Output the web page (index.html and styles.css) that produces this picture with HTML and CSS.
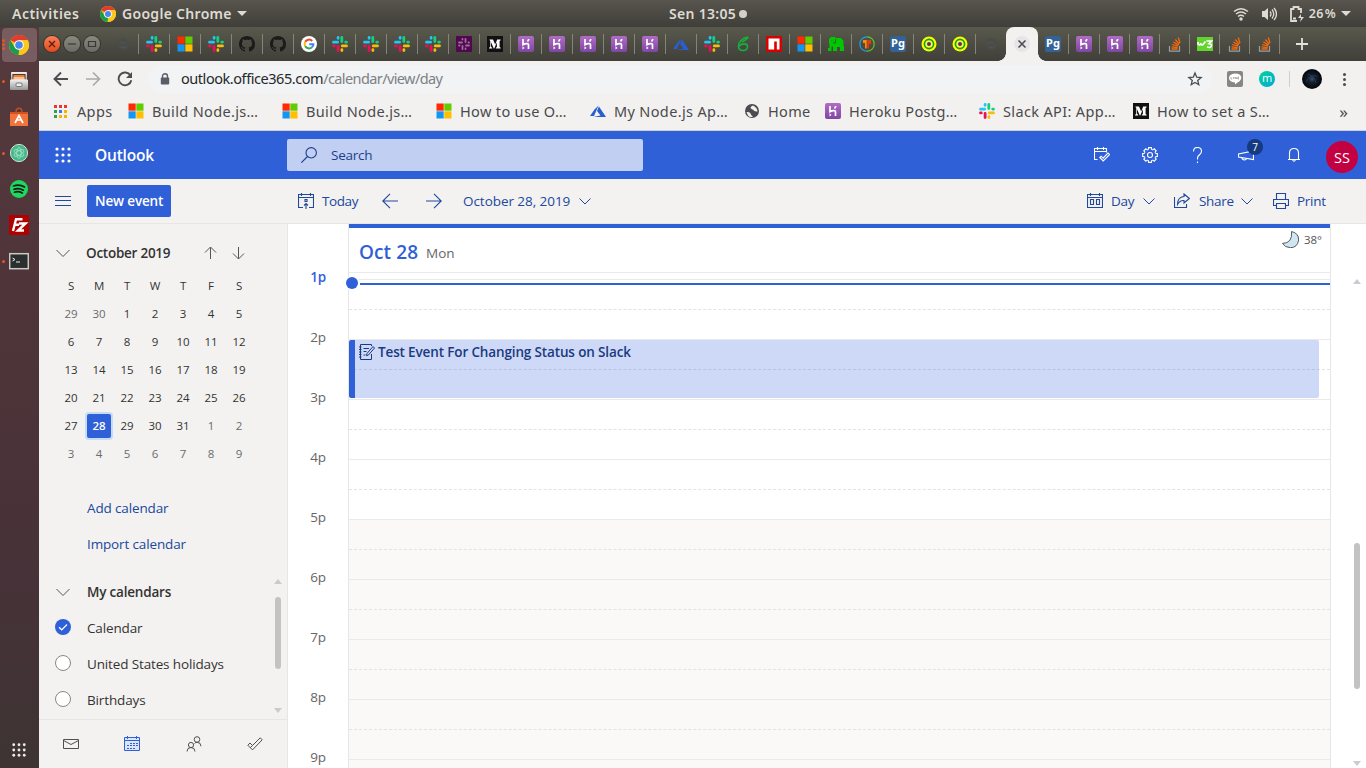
FILE: index.html
```html
<!DOCTYPE html>
<html lang="en">
<head>
<meta charset="utf-8">
<title>Outlook Calendar</title>
<link rel="stylesheet" href="styles.css">
</head>
<body>
<svg class="defs" aria-hidden="true">
  <defs>
    <linearGradient id="purple" x1="0" y1="0" x2="0" y2="1"><stop offset="0" stop-color="#b06dc5"/><stop offset="1" stop-color="#7f46a3"/></linearGradient>
    <linearGradient id="metal" x1="0" y1="0" x2="0" y2="1"><stop offset="0" stop-color="#f2f2f2"/><stop offset="1" stop-color="#969696"/></linearGradient>
    <radialGradient id="space"><stop offset="0" stop-color="#3c5068"/><stop offset=".35" stop-color="#15202f"/><stop offset="1" stop-color="#04050a"/></radialGradient>
    <symbol id="chrome" viewBox="0 0 20 20">
      <circle cx="10" cy="10" r="10" fill="#fbc116"/>
      <path d="M10 10L1.4 5A10 10 0 0 1 18.7 5H10z" fill="#e33b2e"/>
      <path d="M1.4 5L5.7 12.4 10 14.5 9.5 20A10 10 0 0 1 1.4 5z" fill="#189c4d"/>
      <path d="M14.3 12.4L9.7 20A10 10 0 0 0 18.7 5H10z" fill="#fcc81d"/>
      <circle cx="10" cy="10" r="4.8" fill="#fff"/><circle cx="10" cy="10" r="3.8" fill="#4688f1"/>
    </symbol>
    <symbol id="slack" viewBox="0 0 16 16">
      <g fill="none" stroke-width="2.8" stroke-linecap="round">
        <path d="M1.5 6.2H5.6M6.1 1.5v.8" stroke="#1fc8f5"/>
        <path d="M9.8 1.5V5.6M14.5 6.1h-.8" stroke="#14cf80"/>
        <path d="M14.5 9.9H10.3M9.9 14.5v-.8" stroke="#f7bd0c"/>
        <path d="M6.1 14.5V10.3M1.5 9.9h.8" stroke="#ee0f52"/>
      </g>
    </symbol>
    <symbol id="slackp" viewBox="0 0 16 16">
      <path d="M0 0h16v16H0z" fill="#4f0a4e"/>
      <g fill="none" stroke="#a06b9f" stroke-width="1.8" stroke-linecap="round"><path d="M3 6.5h3M6.5 3v.4M9.5 3v3M13 6.5h-.5M13 9.5h-3M9.5 13v-.5M6.5 13v-3M3 9.5h.5"/></g>
    </symbol>
    <symbol id="ms" viewBox="0 0 16 16"><path d="M.5.5h7.2v7.2H.5z" fill="#ff2a00"/><path d="M8.3.5h7.2v7.2H8.3z" fill="#62cc00"/><path d="M.5 8.3h7.2v7.2H.5z" fill="#1496f0"/><path d="M8.3 8.3h7.2v7.2H8.3z" fill="#ffbe00"/></symbol>
    <symbol id="github" viewBox="0 0 16 16"><path fill="#1b1b1b" d="M8 0C3.58 0 0 3.58 0 8c0 3.54 2.29 6.53 5.47 7.59.4.07.55-.17.55-.38 0-.19-.01-.82-.01-1.49-2.01.37-2.53-.49-2.69-.94-.09-.23-.48-.94-.82-1.13-.28-.15-.68-.52-.01-.53.63-.01 1.08.58 1.23.82.72 1.21 1.87.87 2.33.66.07-.52.28-.87.51-1.07-1.78-.2-3.64-.89-3.64-3.95 0-.87.31-1.59.82-2.15-.08-.2-.36-1.02.08-2.12 0 0 .67-.21 2.2.82.64-.18 1.32-.27 2-.27s1.36.09 2 .27c1.53-1.04 2.2-.82 2.2-.82.44 1.1.16 1.92.08 2.12.51.56.82 1.27.82 2.15 0 3.07-1.87 3.75-3.65 3.95.29.25.54.73.54 1.48 0 1.07-.01 1.93-.01 2.2 0 .21.15.46.55.38A8.01 8.01 0 0 0 16 8c0-4.42-3.58-8-8-8z"/></symbol>
    <symbol id="google" viewBox="0 0 16 16"><circle cx="8" cy="8" r="8" fill="#fff"/><g fill="none" stroke-width="2"><path d="M11.2 5A4.4 4.4 0 0 0 4.2 5.8" stroke="#ea4335"/><path d="M4.2 5.8a4.4 4.4 0 0 0 0 4.4" stroke="#fbbc05"/><path d="M4.2 10.2a4.4 4.4 0 0 0 6.7 1.1" stroke="#34a853"/><path d="M10.9 11.3A4.2 4.2 0 0 0 12.4 8.2H8.2" stroke="#4285f4"/></g></symbol>
    <symbol id="medium" viewBox="0 0 16 16"><path d="M0 0h16v16H0z" fill="#111"/><path d="M2.5 3.5H6l2.2 5 2-5h3.4v.7l-1 .8v6l1 .8v.7H8.900v-.7l1-.8V6.300l-2.600 6.200h-.5L4 6.300v4.300l1.200 1.300v.6H2.100v-.6l1.200-1.300V5l-.8-.9z" fill="#fff"/></symbol>
    <symbol id="heroku" viewBox="0 0 16 16"><rect width="16" height="16" rx="2" fill="url(#purple)"/><path d="M5 3v5.600c2-.9 5.500-1.700 5.500.2V13M10.700 3c0 1-.5 1.800-1.200 2.500" fill="none" stroke="#fff" stroke-width="1.700"/><path d="M4.500 10.200l2 1.700-2 1.600z" fill="#fff"/></symbol>
    <symbol id="azure" viewBox="0 0 16 16"><path d="M0 13L4.500 6.400 8.600 2.500 4 13z" fill="#285fd0"/><path d="M9 3.500L16 14H3.500l7-1.600L7 8z" fill="#285fd0"/></symbol>
    <symbol id="six" viewBox="0 0 16 16"><path d="M13 1C7 2 3.500 6 3.500 10.500c0 5.500 9 5 9 .3C12.500 7 7 7 4 10M13 1c0 2-3 3-6 5" fill="none" stroke="#12b43c" stroke-width="1.600"/></symbol>
    <symbol id="npm" viewBox="0 0 16 16"><path d="M0 0h16v16H0z" fill="#d90000"/><path d="M2.500 2.500h11v11H10.800V5.500H8.200v8H2.500z" fill="#fff"/></symbol>
    <symbol id="elephant" viewBox="0 0 16 16"><path d="M0 15V12h1.500V8.500L1 7V3l2-2h4l1 1h5l2.500 3v5H16v5h-4v-4H9v4H5v-4.500H3.500V15z" fill="#00c800"/><path d="M3.500 5h1M7.500 3v4H5" fill="none" stroke="#2a6a20"/></symbol>
    <symbol id="tp" viewBox="0 0 16 16"><path d="M8 .8a7.200 7.200 0 0 0 0 14.400" fill="none" stroke="#1da0e8" stroke-width="1.200"/><path d="M8 .8a7.200 7.200 0 0 1 0 14.400" fill="none" stroke="#5aca26" stroke-width="1.200"/><path d="M4 4h3.700v8.500H6V7H4z" fill="#ff8c00"/><path d="M8.300 4H12v4h-2v4.500H8.300z" fill="#e33a12"/></symbol>
    <symbol id="target" viewBox="0 0 16 16"><circle cx="8" cy="8" r="7.500" fill="#f6ff00"/><circle cx="8" cy="8" r="4.600" fill="#f6ff00" stroke="#159b17" stroke-width="1.600"/><circle cx="8" cy="8" r="2.700" fill="#e8e4dc"/><circle cx="8" cy="8" r="2" fill="#6a3030"/></symbol>
    <symbol id="stack" viewBox="0 0 16 16"><path d="M2.500 10v5.200h10V10" fill="none" stroke="#9aa0a5" stroke-width="1.200"/><path d="M4.500 13h6M4.600 10.900l6 .7M5.100 8.500l5.800 1.700M6.400 6l5.200 3.100M8.300 3.500l3.900 4.600M11.300 1.500l1.700 5.800" stroke="#f46a0c" stroke-width="1.300"/></symbol>
    <symbol id="w3" viewBox="0 0 16 16"><path d="M0 1h16v14H0z" fill="#63d42b"/><path d="M1 6v2q1.500 2 2.700 0V7v1q1.500 2 2.800 0L8.500 5.500M9.500 5h5l-2.500 2.600q3 .2 2.300 2.500-1.300 2.400-4.300.7" fill="none" stroke="#fff" stroke-width="1.700"/></symbol>
    <symbol id="globe" viewBox="0 0 16 16"><circle cx="8" cy="8" r="7" fill="#4a4c4f"/><path d="M2.500 9q3.500-.5 4 1.500t2.500 3q-3 1.500-5-1zM9 2.500Q5.500 4 7 5.500t2 1q1 2.500 4.500 2-.2-4-4.500-6z" fill="#f2f1f0"/></symbol>
    <symbol id="dimglobe" viewBox="0 0 16 16"><circle cx="8" cy="8" r="6" fill="#4a4c49"/><path d="M4 7c3-2 5 1 7 0M6 11q4 2 6-1" stroke="#545650" fill="none"/></symbol>
    <symbol id="chev" viewBox="0 0 14 14"><path d="M.5 4L7 10.500 13.500 4" fill="none" stroke="currentColor"/></symbol>
    <symbol id="chev-s" viewBox="0 0 12 12"><path d="M.5 3.500L6 9 11.500 3.500" fill="none" stroke="currentColor"/></symbol>
    <symbol id="grid9" viewBox="0 0 16 16"><g fill="currentColor"><circle cx="2" cy="2" r="1.600"/><circle cx="8" cy="2" r="1.600"/><circle cx="14" cy="2" r="1.600"/><circle cx="2" cy="8" r="1.600"/><circle cx="8" cy="8" r="1.600"/><circle cx="14" cy="8" r="1.600"/><circle cx="2" cy="14" r="1.600"/><circle cx="8" cy="14" r="1.600"/><circle cx="14" cy="14" r="1.600"/></g></symbol>
    <path id="tooth" d="M13.450 5.740L13.670 6.370 15.340 6.600V9.400L13.670 9.630 13.450 10.260"/>
  </defs>
</svg>

<div class="desktop">
  <header class="panel">
    <span class="panel-activities">Activities</span>
    <svg class="i16"><use href="#chrome"/></svg>
    <span class="panel-app">Google Chrome</span><i class="tri"></i>
    <span class="panel-clock">Sen 13:05</span><i class="clock-dot"></i>
    <div class="panel-status">
      <svg class="i16" viewBox="0 0 16 16" fill="none" stroke="#dfdbd2" stroke-width="1.500"><path d="M1 5.500q7-5.500 14 0M3 8q5-4 10 0M5 10.500q3-2.500 6 0"/><circle cx="8" cy="13" r="1" fill="#dfdbd2"/></svg>
      <svg class="i16" viewBox="0 0 16 16"><path d="M1 5h2.500L7 2v12l-3.500-3H1z" fill="#dfdbd2"/><path d="M9 5.500q2 2.500 0 5M11 3.500q3.500 4.500 0 9M13 2q5 6 0 12" fill="none" stroke="#dfdbd2" stroke-width="1.300"/></svg>
      <svg class="i16" viewBox="0 0 16 16" fill="none" stroke="#dfdbd2" stroke-width="1.800"><path d="M8 15H2V3h2.500V1h5v2H12v4M4 12.500h3"/><path d="M12 8l-3 4h3l-1 4 4-5h-3z" fill="#dfdbd2" stroke="none"/></svg>
      <span class="battery">26 %</span><i class="tri"></i>
    </div>
  </header>

  <div class="workspace">
    <aside class="dock">
      <div class="dock-item active"><i class="run run3"></i><svg viewBox="0 0 20 20"><use href="#chrome"/></svg></div>
      <div class="dock-item"><i class="run"></i><svg viewBox="0 0 20 20"><rect x="2" y="1" width="16" height="9" rx="1" fill="url(#metal)"/><path d="M3.500 3h13v5h-13z" fill="#4a382e"/><path d="M4.500 4h11v5h-11z" fill="#ef7f34"/><path d="M4.500 6h11v3h-11z" fill="#f8c197"/><rect x="1" y="8.500" width="18" height="10.500" rx="1" fill="url(#metal)"/><rect x="7" y="12" width="6" height="3.500" rx="1" fill="#eee" stroke="#777"/></svg></div>
      <div class="dock-item"><svg viewBox="0 0 20 20"><path d="M7 5c0-5 6-5 6 0" fill="none" stroke="#c94a1c" stroke-width="1.500"/><path d="M1 5h18v14H1z" fill="#f0743c"/><path d="M1 5h18v2H1z" fill="#d5521e"/><path d="M6 16l4-7.500 4 7.500M8 13h4" fill="none" stroke="#fff" stroke-width="1.700"/></svg></div>
      <div class="dock-item"><i class="run"></i><svg viewBox="0 0 20 20"><circle cx="10" cy="10" r="8.600" fill="#45b98a" stroke="#d4ddd8"/><g fill="none" stroke="#a5e3c8" stroke-width=".8"><ellipse cx="10" cy="10" rx="2.200" ry="5.500"/><ellipse cx="10" cy="10" rx="2.200" ry="5.500" transform="rotate(60 10 10)"/><ellipse cx="10" cy="10" rx="2.200" ry="5.500" transform="rotate(120 10 10)"/></g></svg></div>
      <div class="dock-item"><svg viewBox="0 0 20 20"><circle cx="10" cy="10" r="9" fill="#1ed760"/><path d="M4.500 7q6-2 11 1M5 10.300q5-1.600 9.300.9M5.500 13.200q4-1.300 7.800.8" fill="none" stroke="#151a17" stroke-width="1.700" stroke-linecap="round"/></svg></div>
      <div class="dock-item"><svg viewBox="0 0 20 20"><path d="M0 0h20v20H0z" fill="#b00000"/><path d="M4 16L7 4.200h6.500M5 9.700h5M10 8.500h6.500L9 15.500h6" fill="none" stroke="#fff" stroke-width="2.400"/></svg></div>
      <div class="dock-item"><i class="run"></i><svg viewBox="0 0 20 20"><rect x=".7" y="2.700" width="18.600" height="15" fill="#2b2e2e" stroke="#c9c9c5" stroke-width="1.500"/><path d="M3.500 7l2.500 1.500-2.500 1.500M7 11h4" fill="none" stroke="#eee"/></svg></div>
      <svg class="dock-apps"><use href="#grid9"/></svg>
    </aside>

    <main class="browser">
      <div class="tabs">
        <div class="winctl"><b class="close"><svg viewBox="0 0 16 16"><path d="M5 5l6 6M11 5l-6 6" stroke="#5a1d08" stroke-width="1.300"/></svg></b><b><svg viewBox="0 0 16 16"><path d="M4 8h8" stroke="#383834" stroke-width="1.200"/></svg></b><b><svg viewBox="0 0 16 16"><path d="M4.500 5.500h7v5h-7z" fill="none" stroke="#383834" stroke-width="1.200"/></svg></b></div>
        <div class="tab"><svg><use href="#dimglobe"/></svg></div>
        <div class="tab"><svg><use href="#slack"/></svg></div>
        <div class="tab"><svg><use href="#ms"/></svg></div>
        <div class="tab"><svg><use href="#slack"/></svg></div>
        <div class="tab"><svg><use href="#github"/></svg></div>
        <div class="tab"><svg><use href="#github"/></svg></div>
        <div class="tab"><svg><use href="#google"/></svg></div>
        <div class="tab"><svg><use href="#slack"/></svg></div>
        <div class="tab"><svg><use href="#slack"/></svg></div>
        <div class="tab"><svg><use href="#slack"/></svg></div>
        <div class="tab"><svg><use href="#slack"/></svg></div>
        <div class="tab"><svg><use href="#slackp"/></svg></div>
        <div class="tab"><svg><use href="#medium"/></svg></div>
        <div class="tab"><svg><use href="#heroku"/></svg></div>
        <div class="tab"><svg><use href="#heroku"/></svg></div>
        <div class="tab"><svg><use href="#heroku"/></svg></div>
        <div class="tab"><svg><use href="#heroku"/></svg></div>
        <div class="tab"><svg><use href="#heroku"/></svg></div>
        <div class="tab"><svg><use href="#azure"/></svg></div>
        <div class="tab"><svg><use href="#slack"/></svg></div>
        <div class="tab"><svg><use href="#six"/></svg></div>
        <div class="tab"><svg><use href="#npm"/></svg></div>
        <div class="tab"><svg><use href="#ms"/></svg></div>
        <div class="tab"><svg><use href="#elephant"/></svg></div>
        <div class="tab"><svg><use href="#tp"/></svg></div>
        <div class="tab"><span class="pg">Pg</span></div>
        <div class="tab"><svg><use href="#target"/></svg></div>
        <div class="tab"><svg><use href="#target"/></svg></div>
        <div class="tab last"><svg><use href="#dimglobe"/></svg></div>
        <div class="tab-active"><svg viewBox="0 0 16 16"><circle cx="8" cy="8" r="8" fill="#e6e6e8"/><path d="M4.500 4.500l7 7M11.500 4.500l-7 7" stroke="#4d4d50" stroke-width="1.600"/></svg></div>
        <div class="tab"><span class="pg">Pg</span></div>
        <div class="tab"><svg><use href="#heroku"/></svg></div>
        <div class="tab narrow"><svg><use href="#heroku"/></svg></div>
        <div class="tab narrow"><svg><use href="#heroku"/></svg></div>
        <div class="tab narrow"><svg><use href="#stack"/></svg></div>
        <div class="tab narrow"><svg><use href="#w3"/></svg></div>
        <div class="tab narrow"><svg><use href="#stack"/></svg></div>
        <div class="tab narrow"><svg><use href="#stack"/></svg></div>
        <svg class="plus" viewBox="0 0 12 12"><path d="M6 0v12M0 6h12" stroke="#e4e1d8" stroke-width="1.800"/></svg>
      </div>

      <div class="addressbar">
        <svg class="nav" viewBox="0 0 16 16"><path d="M15 8H2M8 1.500L1.500 8 8 14.500" fill="none" stroke="#4c4d50" stroke-width="1.900"/></svg>
        <svg class="nav" viewBox="0 0 16 16"><path d="M1 8h13M8 1.500L14.500 8 8 14.500" fill="none" stroke="#a9a9aa" stroke-width="1.700"/></svg>
        <svg class="nav" viewBox="0 0 16 16"><path d="M13.500 4.500A6.400 6.400 0 1 0 14.300 9.200" fill="none" stroke="#4c4d50" stroke-width="1.900"/><path d="M15 1v6H9z" fill="#4c4d50"/></svg>
        <div class="omnibox">
          <svg class="lock" viewBox="0 0 10 12"><path d="M2.500 5V3.200a2.500 2.500 0 0 1 5 0V5" fill="none" stroke="#5c5c66" stroke-width="1.400"/><rect x=".8" y="4.500" width="8.400" height="7" rx="1" fill="#5c5c66"/></svg>
          <span class="url"><b>outlook.office365.com</b>/calendar/view/day</span>
          <svg class="star" viewBox="0 0 16 16"><path d="M8 2l1.700 4.200 4.400.3-3.400 2.900 1.100 4.300L8 11.400l-3.800 2.300 1.100-4.300-3.400-2.900 4.400-.3z" fill="none" stroke="#4c4d50" stroke-width="1.300"/></svg>
        </div>
        <svg class="i16 ext-line" viewBox="0 0 16 16"><rect width="16" height="16" rx="2" fill="#868686"/><path d="M8 2.500c8 0 8 6.500 2.500 9L8 13.500v-2C0 11.500 0 2.500 8 2.500z" fill="#fff"/><path d="M4 6v2h1.300M6.500 6v2M8 8V6l1.300 2V6M12 6h-1.200v2H12M10.800 7H12" fill="none" stroke="#868686" stroke-width=".6"/></svg>
        <span class="ext-m">m</span>
        <i class="ext-sep"></i>
        <svg class="avatar" viewBox="0 0 20 20"><circle cx="10" cy="10" r="10" fill="url(#space)"/><path d="M4 13q3-8 12-6M6 5q7 3 8 9" stroke="#2c4562" fill="none" opacity=".6"/></svg>
        <i class="kebab"></i>
      </div>

      <div class="bookmarks">
        <span class="bm w-apps"><i class="apps"></i>Apps</span>
        <span class="bm"><svg class="i16"><use href="#ms"/></svg>Build Node.js…</span>
        <span class="bm"><svg class="i16"><use href="#ms"/></svg>Build Node.js…</span>
        <span class="bm"><svg class="i16"><use href="#ms"/></svg>How to use O…</span>
        <span class="bm"><svg class="i16"><use href="#azure"/></svg>My Node.js Ap…</span>
        <span class="bm w-home"><svg class="i16"><use href="#globe"/></svg>Home</span>
        <span class="bm"><svg class="i16"><use href="#heroku"/></svg>Heroku Postg…</span>
        <span class="bm"><svg class="i16"><use href="#slack"/></svg>Slack API: App…</span>
        <span class="bm"><svg class="i16"><use href="#medium"/></svg>How to set a S…</span>
        <span class="more">»</span>
      </div>

      <div class="suite">
        <svg class="waffle"><use href="#grid9"/></svg>
        <span class="brand">Outlook</span>
        <div class="search"><svg viewBox="0 0 16 16" fill="none" stroke="#1c3f8c" stroke-width="1.100"><circle cx="10.200" cy="5.800" r="5.200"/><path d="M6.500 9.500L.3 15.700"/></svg>Search</div>
        <div class="suite-icons">
          <svg viewBox="0 0 16 16"><path d="M3.500 12.500h-3v-11h12v4M.500 4.500h12M3.500 0v3M9.500 0v3M5.800 10.500l1.400-1.300 1.900 1.900 4.900-5 1.500 1.500L9.200 14z"/></svg>
          <svg viewBox="0 0 16 16"><circle cx="8" cy="8" r="2.500"/><use href="#tooth"/><use href="#tooth" transform="rotate(45 8 8)"/><use href="#tooth" transform="rotate(90 8 8)"/><use href="#tooth" transform="rotate(135 8 8)"/><use href="#tooth" transform="rotate(180 8 8)"/><use href="#tooth" transform="rotate(225 8 8)"/><use href="#tooth" transform="rotate(270 8 8)"/><use href="#tooth" transform="rotate(315 8 8)"/></svg>
          <svg viewBox="0 0 16 16"><path d="M3.500 4.500Q3.500.500 7.500.500t4 4C11.500 7.500 7.500 8 7.500 11v1.500M7.500 14.500V16"/></svg>
          <span class="mega"><svg viewBox="0 0 16 16"><path d="M.5 7v3L15.500 12.500V4zM4 10.800v.9q2 2.500 4.500.2"/></svg><em>7</em></span>
          <svg viewBox="0 0 16 16"><path d="M3.500 12.500V6Q3.500 1.500 8 1.500T12.500 6v6.500M2 12.500h12M6.500 12.700q1.500 3 3 0"/></svg>
        </div>
        <span class="me">SS</span>
      </div>

      <div class="commands">
        <svg class="burger" viewBox="0 0 16 10"><path d="M0 .5h16M0 4.500h16M0 9.500h16" stroke="#20489c"/></svg>
        <span class="new-event">New event</span>
        <svg class="ci today-ic" viewBox="0 0 16 16"><path d="M5 14.500H.500v-13h15v13H11M.500 4.500h15M3.500 0v3M12.500 0v3M7 6.500h2v2H7zM8 16v-5.500M6 12.500l2-2 2 2"/></svg>
        <span class="today">Today</span>
        <svg class="ci prev" viewBox="0 0 16 16"><path d="M16 8H.7M8 .8L.8 8 8 15.200"/></svg>
        <svg class="ci next" viewBox="0 0 16 16"><path d="M0 8h15.300M8 .8L15.200 8 8 15.200"/></svg>
        <span class="date">October 28, 2019</span>
        <svg class="cs"><use href="#chev-s"/></svg>
        <div class="cmd-right">
          <svg class="ci" viewBox="0 0 16 16"><path d="M.5 1.500h15v13H.500zM.500 4.500h15M3.500 0v3M12.500 0v3M3.500 6.500h3v5h-3zM9.500 6.500h3v5h-3z"/></svg>
          <span class="t-day">Day</span><svg class="cs"><use href="#chev-s"/></svg>
          <svg class="ci share-ic" viewBox="0 0 16 16"><path d="M.5 4v10.500h12V11M10 1l5.300 4.500L10 10V7.500q-4-.5-6.500 4Q3.500 4 10 3.500z"/></svg>
          <span class="t-share">Share</span><svg class="cs"><use href="#chev-s"/></svg>
          <svg class="ci print-ic" viewBox="0 0 16 16"><path d="M3.500 12.500h-3v-6h15v6h-3M3.500 6.500v-6h9v6M3.500 10.500h9v5h-9z"/></svg>
          <span class="t-print">Print</span>
        </div>
      </div>

      <div class="content">
        <nav class="side">
          <div class="month">
            <svg class="cc"><use href="#chev"/></svg><strong>October 2019</strong>
            <svg class="arr" viewBox="0 0 12 14"><path d="M6.500 13V1.500M1 6.500L6.500 1 12 6.500"/></svg>
            <svg class="arr" viewBox="0 0 12 14"><path d="M6.500 1v11.500M1 7.500L6.500 13 12 7.500"/></svg>
          </div>
          <div class="mini">
            <span>S</span><span>M</span><span>T</span><span>W</span><span>T</span><span>F</span><span>S</span>
            <span class="off">29</span><span class="off">30</span><span>1</span><span>2</span><span>3</span><span>4</span><span>5</span>
            <span>6</span><span>7</span><span>8</span><span>9</span><span>10</span><span>11</span><span>12</span>
            <span>13</span><span>14</span><span>15</span><span>16</span><span>17</span><span>18</span><span>19</span>
            <span>20</span><span>21</span><span>22</span><span>23</span><span>24</span><span>25</span><span>26</span>
            <span>27</span><span class="sel">28</span><span>29</span><span>30</span><span>31</span><span class="off">1</span><span class="off">2</span>
            <span class="off">3</span><span class="off">4</span><span class="off">5</span><span class="off">6</span><span class="off">7</span><span class="off">8</span><span class="off">9</span>
          </div>
          <div class="links"><a>Add calendar</a><a>Import calendar</a></div>
          <div class="cals">
            <div class="cal-list">
              <div class="cal head"><svg class="cc"><use href="#chev"/></svg><strong>My calendars</strong></div>
              <div class="cal"><i class="ring on"><svg viewBox="0 0 16 16"><path d="M4 8.200l2.700 2.600L12 5.500" fill="none" stroke="#fff" stroke-width="1.200"/></svg></i><span>Calendar</span></div>
              <div class="cal"><i class="ring"></i><span>United States holidays</span></div>
              <div class="cal"><i class="ring"></i><span>Birthdays</span></div>
            </div>
            <div class="sb"><i class="up"></i><i class="thumb"></i><i class="down"></i></div>
          </div>
          <div class="modules">
            <svg viewBox="0 0 16 16"><path d="M.5 3.500h15v9H.500zM.500 4.500L8 8.500l7.500-4"/></svg>
            <svg class="on" viewBox="0 0 16 16"><path d="M.5 1.500h15v13H.500zM.500 4.500h15M3.500 0v3M12.500 0v3"/><path d="M6 7.500h8M3 9.500h11M3 12.500h8" stroke-dasharray="2 1"/></svg>
            <svg viewBox="0 0 16 16"><circle cx="11" cy="3.500" r="2.800"/><circle cx="5" cy="9" r="2.600"/><path d="M1 15.500q0-4 4-4t4 4M8.500 7.500q1-1.200 2.500-1.200 4 0 4 4"/></svg>
            <svg viewBox="0 0 16 16"><path d="M.8 9.200L3 7l2.500 2.500 7.700-7.700 2 2L5.500 13.900zM3.300 11.700L5.500 9.500"/></svg>
          </div>
        </nav>

        <section class="day">
          <div class="hours"><span class="now">1p</span><span>2p</span><span>3p</span><span>4p</span><span>5p</span><span>6p</span><span>7p</span><span>8p</span><span>9p</span></div>
          <div class="column">
            <div class="day-head"><span class="d1">Oct 28</span><span class="d2">Mon</span>
              <div class="weather"><svg viewBox="0 0 16 16"><path d="M9 .500Q15.700 2 15.700 8.500 14.500 15.700 8 15.700 2.500 15.500.500 11.700 10 11.500 9 .5z" fill="#cfe6f3" stroke="#4d5358" stroke-width=".9"/></svg>38°</div>
            </div>
            <div class="slots">
              <div class="hour"></div><div class="hour"></div><div class="hour"></div><div class="hour"></div>
              <div class="hour late"></div><div class="hour late"></div><div class="hour late"></div><div class="hour late"></div><div class="hour late"></div>
              <div class="nowline"></div><div class="nowdot"></div>
              <div class="event"><svg viewBox="0 0 16 16" fill="none" stroke="#1b3a80"><path d="M12.500 10v5.500h-11v-15h11V2M0 3h2.500M0 5.500h2.500M0 8h2.500M0 10.500h2.500M0 13h2.500M4.500 4.500h5.500M4.500 7.500h3M4.500 11h2M8 9.500L14 2.500l1.500 1.500L9.500 11l-2 .7z"/></svg><span>Test Event For Changing Status on Slack</span></div>
            </div>
          </div>
          <div class="sb main-sb"><i class="up"></i><i class="thumb"></i><i class="down"></i></div>
        </section>
      </div>
    </main>
  </div>
</div>
</body>
</html>
```
FILE: styles.css
```css
*, *::before, *::after { box-sizing: border-box; }
body { margin: 0; font-family: "Open Sans", "Noto Sans", sans-serif; overflow: hidden; }
.defs { position: absolute; width: 0; height: 0; }
svg { display: block; flex: none; }
i, em { font-style: normal; }
span, strong, a { white-space: nowrap; }
.i16 { width: 16px; height: 16px; }
.desktop { width: 1366px; height: 768px; display: flex; flex-direction: column; overflow: hidden; }

/* system panel */
.panel { height: 27px; flex: none; display: flex; align-items: center; padding-left: 12px; color: #dfdbd2; font: 600 14px "Noto Sans", sans-serif; background: linear-gradient(#57554d, #403e39); }
.panel-activities { width: 88px; letter-spacing: .5px; }
.panel-app { margin-left: 6px; width: 111px; letter-spacing: .3px; }
.tri { flex: none; border: 5px solid transparent; border-top-color: #dfdbd2; border-bottom: 0; margin-left: 4px; }
.panel-clock { margin-left: 422px; width: 68px; letter-spacing: .3px; }
.clock-dot { width: 8px; height: 8px; border-radius: 50%; background: #d3d0c9; margin-left: 2px; }
.panel-status { margin-left: auto; display: flex; align-items: center; padding-right: 15px; gap: 12px; }
.panel-status .tri { margin-left: -7px; }
.battery { font-size: 12.5px; margin-left: -8px; letter-spacing: .3px; word-spacing: -2.5px; }

.workspace { flex: 1; display: flex; min-height: 0; }

/* launcher */
.dock { width: 39px; flex: none; display: flex; flex-direction: column; align-items: center; background: linear-gradient(#55393d, #4d3439 45%, #463238 75%, #3e3433); }
.dock-item { width: 35px; height: 36px; display: flex; align-items: center; position: relative; padding-left: 7px; }
.dock-item svg { width: 20px; height: 20px; }
.dock-item.active { height: 34px; margin: 1px 0 1px; border-radius: 4px; background: #775d60; }
.run { position: absolute; left: 0; top: 17px; width: 3px; height: 3px; border-radius: 50%; background: #e95420; }
.run3 { top: 15px; box-shadow: 0 -4px #e95420, 0 4px #e95420; }
.dock-apps { width: 14px; height: 14px; margin: auto 1px 11px 0; color: #ececec; }

.browser { flex: 1; min-width: 0; display: flex; flex-direction: column; background: #f2f1f0; }

/* tab strip */
.tabs { height: 34px; flex: none; display: flex; align-items: center; background: linear-gradient(#5a594d, #403f39); }
.winctl { width: 69px; padding-left: 5px; display: flex; gap: 4px; }
.winctl b { width: 16px; height: 16px; border-radius: 50%; background: linear-gradient(#8a887f, #6d6c64); box-shadow: 0 0 0 1px #34332e; }
.winctl .close { background: linear-gradient(#f98058, #e6491c); }
.tab { width: 31px; height: 20px; flex: none; display: flex; align-items: center; justify-content: center; border-right: 1px solid #85847a; }
.tab svg { width: 16px; height: 16px; }
.tab.narrow { width: 30px; }
.tab.last { width: 30px; border-right: 0; }
.tab-active { position: relative; width: 32px; height: 34px; flex: none; display: flex; align-items: center; justify-content: center; border-radius: 8px 8px 0 0; background: #f2f1f0; }
.tab-active::before, .tab-active::after { content: ""; position: absolute; bottom: 0; width: 8px; height: 8px; }
.tab-active::before { left: -8px; background: radial-gradient(circle at 0 0, transparent 7.5px, #f2f1f0 8px); }
.tab-active::after { right: -8px; background: radial-gradient(circle at 100% 0, transparent 7.5px, #f2f1f0 8px); }
.tab-active svg { width: 16px; height: 16px; }
.pg { width: 16px; height: 16px; border-radius: 2px; background: #336296; color: #fff; font: 700 11px/14px "Noto Sans", sans-serif; text-align: center; }
.plus { width: 12px; height: 12px; margin-left: 16px; }

/* toolbar */
.addressbar { height: 36px; flex: none; display: flex; align-items: center; padding-left: 14px; }
.nav { width: 16px; height: 16px; margin-right: 16px; }
.omnibox { width: 1064px; height: 28px; margin-left: -1px; border-radius: 14px; background: #f1f3f4; display: flex; align-items: center; padding: 0 9px 0 12px; }
.lock { width: 10px; height: 12px; }
.url { margin: -2px 0 0 11px; font: 14.5px "Noto Sans", sans-serif; letter-spacing: -.6px; color: #7d8084; }
.url b { font-weight: 400; color: #27282b; letter-spacing: -.45px; }
.star { width: 16px; height: 16px; margin-left: auto; }
.ext-line { margin-left: 15px; }
.ext-m { width: 16px; height: 16px; border-radius: 50%; margin-left: 16px; background: linear-gradient(135deg, #00d49a, #00a9d4); color: #fff; font-size: 11px; line-height: 14px; text-align: center; }
.ext-sep { width: 1px; height: 16px; margin-left: 14px; background: #cfcecd; }
.avatar { width: 20px; height: 20px; margin-left: 12px; }
.kebab { width: 3px; height: 3px; margin-left: 21px; border-radius: 50%; background: #4c4d50; box-shadow: 0 -5px #4c4d50, 0 5px #4c4d50; }

.bookmarks { height: 34px; flex: none; display: flex; align-items: center; padding: 0 18px 5px 15px; border-bottom: 1px solid #cfcfcf; font: 14.5px "Noto Sans", sans-serif; color: #4a4a4c; }
.bm { width: 154px; display: flex; align-items: center; gap: 8px; letter-spacing: .35px; flex: none; }
.bm.w-apps { width: 74px; gap: 10px; }
.bm.w-home { width: 81px; }
.apps { width: 3px; height: 3px; margin: 0 10px 10px 0; background: #e33; box-shadow: 5px 0 #e33, 10px 0 #e33, 0 5px #2ca24c, 5px 5px #3b78e7, 10px 5px #f5b400, 0 10px #2ca24c, 5px 10px #f5b400, 10px 10px #f5b400; }
.more { margin-left: auto; font-size: 17px; }

/* Outlook header */
.suite { height: 48px; flex: none; display: flex; align-items: center; background: #2f60d8; color: #fff; }
.waffle { width: 16px; height: 16px; margin-left: 16px; }
.brand { width: 192px; margin-left: 24px; font-size: 15.5px; font-weight: 600; letter-spacing: -.2px; }
.search { width: 356px; height: 32px; display: flex; align-items: center; border-radius: 2px; padding-left: 14px; gap: 14px; background: #c1cff3; color: #1c3f8c; font-size: 13.5px; letter-spacing: -.25px; }
.search svg { width: 16px; height: 16px; }
.suite-icons { margin-left: auto; display: flex; gap: 32px; }
.suite-icons svg { width: 16px; height: 16px; fill: none; stroke: #fff; stroke-width: 1.1; }
.mega { position: relative; }
.mega em { position: absolute; left: 9px; top: -8px; width: 16px; height: 16px; border-radius: 50%; background: #153a80; font-size: 10px; line-height: 16px; text-align: center; }
.me { width: 32px; height: 32px; margin: 4px 8px 0 24px; border-radius: 50%; background: #c30041; font-size: 14.5px; line-height: 33px; text-align: center; }

/* command bar */
.commands { height: 45px; flex: none; display: flex; align-items: center; background: #f3f2f1; border-bottom: 1px solid #e8e6e4; color: #20489c; font-size: 13.5px; letter-spacing: -.3px; }
.burger { width: 16px; height: 10px; margin-left: 16px; }
.new-event { width: 84px; height: 32px; margin-left: 16px; padding-left: 8px; border-radius: 2px; background: #2f60d8; color: #fff; font-weight: 600; line-height: 32px; letter-spacing: -.15px; }
.ci { width: 16px; height: 16px; fill: none; stroke: #20489c; stroke-width: 1.1; }
.cc { width: 14px; height: 14px; }
.cs { width: 12px; height: 12px; }
.today-ic { margin-left: 127px; }
.today { margin-left: 8px; width: 60px; letter-spacing: -.4px; }
.next { margin-left: 28px; }
.date { margin-left: 21px; width: 116px; letter-spacing: -.05px; }
.cmd-right { margin-left: auto; display: flex; align-items: center; width: 279px; }
.t-day { margin-left: 8px; width: 32px; }
.share-ic { margin-left: 19px; }
.t-share { margin-left: 9px; width: 42px; }
.print-ic { margin-left: 20px; }
.t-print { margin-left: 8px; }

.content { flex: 1; min-height: 0; display: flex; }

/* side pane */
.side { width: 249px; flex: none; display: flex; flex-direction: column; background: #f3f2f1; border-right: 1px solid #e8e6e4; color: #333; font-size: 13.5px; letter-spacing: -.14px; }
.month { height: 48px; display: flex; align-items: center; padding: 10px 0 0 17px; color: #555; }
.month strong { margin-left: 16px; width: 118px; font-weight: 600; color: #333; letter-spacing: -.25px; }
.arr { width: 12px; height: 14px; margin-right: 16px; fill: none; stroke: #555; overflow: visible; }
.mini { display: grid; grid-template-columns: repeat(7, 28px); grid-auto-rows: 28px; padding-left: 18px; font-size: 11.5px; letter-spacing: -.1px; line-height: 28px; text-align: center; color: #333; }
.off { color: #6b6b6b; }
.sel { margin: 2px; line-height: 24px; background: #2f60d8; color: #fff; font-weight: 600; border-radius: 2px; box-shadow: 0 0 0 2px #c5dcf7; }
.links { display: flex; flex-direction: column; padding: 22px 0 0 48px; color: #20489c; }
.links a { height: 36px; line-height: 36px; }
.cals { flex: 1; min-height: 0; display: flex; justify-content: space-between; padding-top: 12px; }
.cal { height: 36px; display: flex; align-items: center; padding-left: 16px; gap: 16px; }
.cal.head { padding-left: 17px; gap: 17px; color: #555; }
.cal.head strong { font-weight: 600; color: #333; letter-spacing: -.2px; }
.ring { width: 16px; height: 16px; border-radius: 50%; background: #fff; border: 1px solid #8a8886; margin-top: -3px; }
.ring.on { background: #2f60d8; border: 0; }
.sb { display: flex; flex-direction: column; align-items: center; width: 8px; }
.up { border: 4px solid transparent; border-bottom: 5px solid #c6ccd2; border-top: 0; }
.down { border: 4px solid transparent; border-top: 5px solid #c6ccd2; border-bottom: 0; margin-top: auto; }
.thumb { width: 6px; border-radius: 3px; background: #c3c3c3; }
.side .sb { margin: 5px 5px 6px 0; }
.side .thumb { height: 72px; margin-top: 13px; }
.modules { height: 49px; flex: none; border-top: 1px solid #e8e6e4; display: flex; align-items: center; padding-left: 24px; gap: 45.3px; }
.modules svg { width: 16px; height: 16px; fill: none; stroke: #505050; stroke-width: 1; }
.modules .on { stroke: #2f60d8; fill: #dce6fb; }

/* day view */
.day { flex: 1; display: flex; background: #fff; overflow: hidden; }
.hours { width: 60px; flex: none; padding-top: 43px; color: #666; font-size: 13.5px; text-align: center; }
.hours span { display: block; height: 60px; line-height: 20px; letter-spacing: -.2px; }
.hours .now { color: #2f60d8; font-weight: 600; }
.column { width: 983px; flex: none; border-left: 1px solid #e6e6e6; border-right: 1px solid #e6e6e6; }
.day-head { height: 49px; display: flex; align-items: center; border-top: 4px solid #2f60d8; border-bottom: 1px solid #eaeaea; padding: 4px 8px 0 10px; }
.d1 { font-size: 19px; font-weight: 600; color: #2f60d8; letter-spacing: .1px; width: 67px; }
.d2 { font-size: 13.5px; color: #666; padding-top: 2px; }
.weather { margin: 0 0 26px auto; display: flex; align-items: center; gap: 5px; font-size: 11.5px; color: #555; }
.weather svg { width: 17px; height: 17px; }
.slots { position: relative; padding-top: 6px; }
.hour { height: 60px; border-top: 1px solid #eaeaea; }
.hour::before { content: ""; display: block; height: 30px; border-bottom: 1px dashed #e3e3e3; }
.late { background: #faf9f8; }
.nowline { position: absolute; left: 11px; right: 0; top: 10px; height: 2px; background: #2f60d8; }
.nowdot { position: absolute; left: -3px; top: 4px; width: 12px; height: 12px; border-radius: 50%; background: #2f60d8; box-shadow: 0 0 0 1px #fff; }
.event { position: absolute; left: 0; top: 67px; width: 970px; height: 58px; display: flex; padding: 3px 0 0 4px; border-left: 6px solid #2f60d8; border-radius: 2px; background: rgba(47, 96, 216, .24); color: #1b3a80; font-size: 13.5px; font-weight: 600; line-height: 19px; letter-spacing: -.14px; gap: 3px; }
.event svg { width: 16px; height: 16px; margin-top: 1px; }
.main-sb { margin: 55px 0 2px auto; width: 18px; }
.main-sb .thumb { height: 146px; margin-top: 259px; }
```
